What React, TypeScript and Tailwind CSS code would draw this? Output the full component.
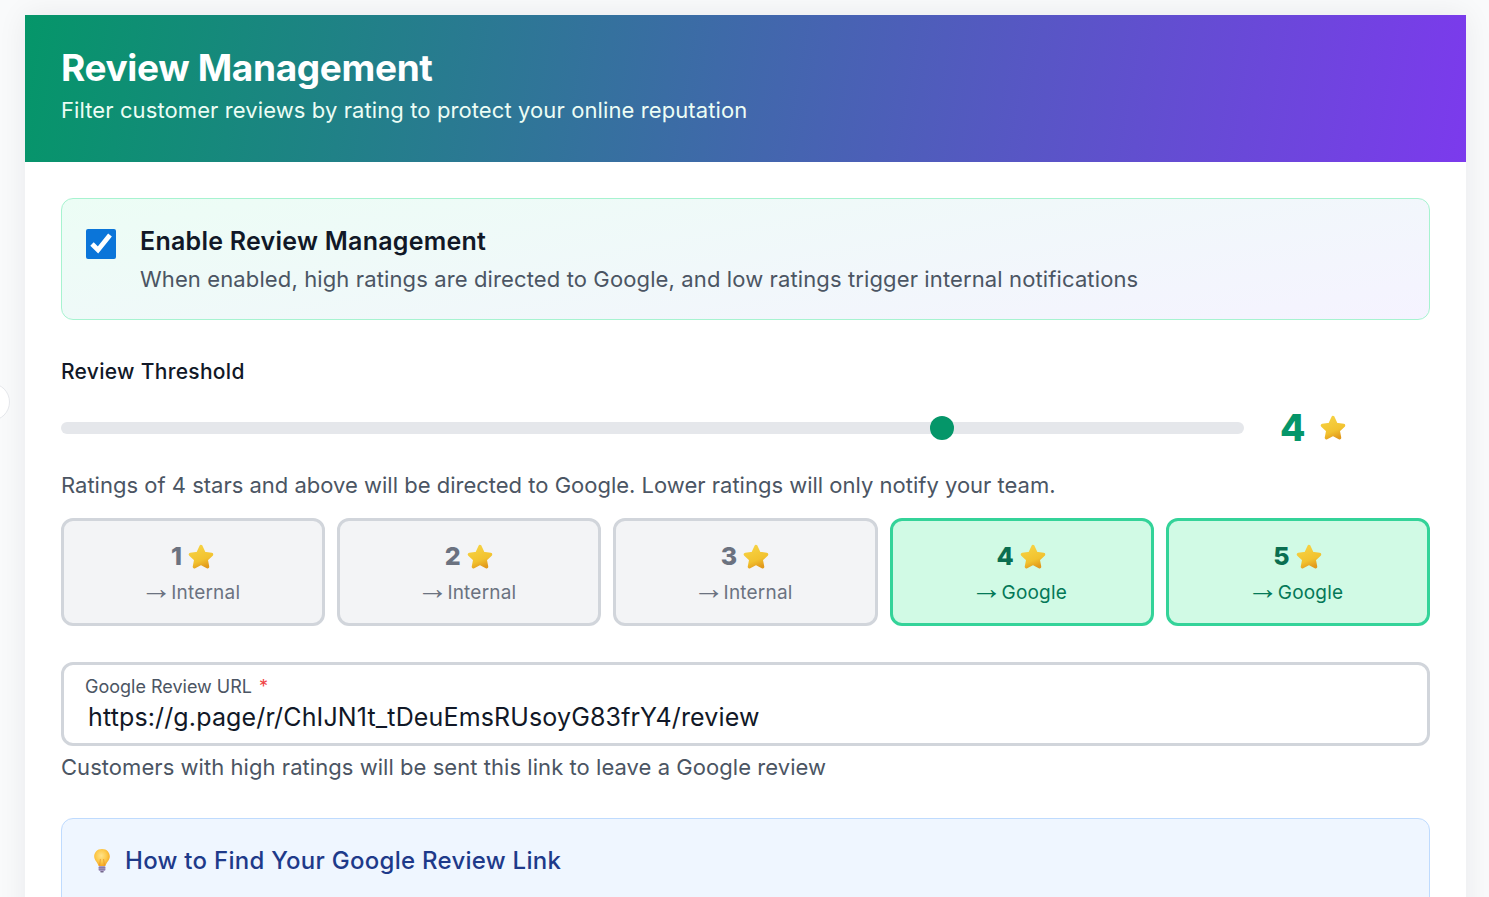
import { useId } from 'react'

const THRESHOLD = 4

const RATINGS = [1, 2, 3, 4, 5]

function Star({ className }: { className?: string }) {
  const id = useId()
  return (
    <svg viewBox="0 0 26 26" className={className}>
      <defs>
        <linearGradient id={id} x1="0.3" y1="0" x2="0.7" y2="1">
          <stop offset="0" stopColor="#f6d142" />
          <stop offset="0.65" stopColor="#f2c22f" />
          <stop offset="1" stopColor="#e29a1c" />
        </linearGradient>
      </defs>
      <path
        d="M13 3.4 L15.9 9.7 L22.8 10.6 L17.8 15.3 L19.1 22.1 L13 18.8 L6.9 22.1 L8.2 15.3 L3.2 10.6 L10.1 9.7 Z"
        fill={`url(#${id})`}
        stroke={`url(#${id})`}
        strokeWidth="3.2"
        strokeLinejoin="round"
      />
    </svg>
  )
}

function Bulb({ className }: { className?: string }) {
  const id = useId()
  return (
    <svg viewBox="0 0 18 26" className={className}>
      <defs>
        <radialGradient id={id} cx="0.45" cy="0.4" r="0.6">
          <stop offset="0" stopColor="#ffe38a" />
          <stop offset="0.6" stopColor="#fdc94a" />
          <stop offset="1" stopColor="#f6a821" />
        </radialGradient>
      </defs>
      <path
        d="M9 1 C4 1 1.2 4.6 1.2 8.4 C1.2 12.2 4.6 14 5.6 18 L12.4 18 C13.4 14 16.8 12.2 16.8 8.4 C16.8 4.6 14 1 9 1 Z"
        fill={`url(#${id})`}
      />
      <path d="M6.6 17.5 L7.4 11 M11.4 17.5 L10.6 11" stroke="#e8962a" strokeWidth="0.8" fill="none" />
      <rect x="5.6" y="18" width="6.8" height="5" rx="1.2" fill="#a79ac4" />
      <path d="M5.8 19.6 H12.2 M5.8 21.3 H12.2" stroke="#7f7198" strokeWidth="0.8" />
      <rect x="7.2" y="23" width="3.6" height="1.6" rx="0.8" fill="#75688d" />
    </svg>
  )
}

function RatingCard({ rating }: { rating: number }) {
  const toGoogle = rating >= THRESHOLD
  return (
    <div
      className={
        toGoogle
          ? 'flex h-[108px] flex-col items-center justify-center rounded-xl border-[3px] border-[#34d399] bg-[#d1fae5] pt-[6px]'
          : 'flex h-[108px] flex-col items-center justify-center rounded-xl border-[3px] border-[#d1d5db] bg-[#f3f4f6] pt-[6px]'
      }
    >
      <div className="flex h-9 items-center gap-[5px]">
        <span className={toGoogle ? 'text-[25px] font-extrabold text-[#0a6e50]' : 'text-[25px] font-extrabold text-[#6b7280]'}>
          {rating}
        </span>
        <Star className="h-[28px] w-[28px]" />
      </div>
      <div
        className={
          toGoogle
            ? 'flex h-9 items-center pr-[6px] text-[19px] tracking-[0.2px] text-[#047857]'
            : 'flex h-9 items-center pr-[6px] text-[19px] tracking-[0.2px] text-[#6b7280]'
        }
      >
        <span className="mr-[-1px] -translate-y-[5px] font-['Liberation_Sans'] text-[32px] leading-none">→</span>
        {toGoogle ? 'Google' : 'Internal'}
      </div>
    </div>
  )
}

export default function App() {
  return (
    <div className="relative h-[897px] overflow-hidden bg-[#f9fafb] pl-[25px] pr-[23px] pt-[15px] font-['Inter',sans-serif] text-[#111827]">
      {/* sidebar handle peeking in from the left */}
      <div className="absolute left-[-28px] top-[383px] h-[38px] w-[38px] rounded-full border border-[#e5e7eb] bg-white" />

      <div className="bg-white shadow-[0_0_28px_rgba(17,24,39,0.07)]">
        {/* Header */}
        <div className="bg-linear-[100deg] from-[#059669] to-[#7c3aed] px-9 pb-9 pt-[31px] text-white">
          <h1 className="text-[37px] font-bold leading-[44px] tracking-[-0.35px]">Review Management</h1>
          <p className="mt-1 text-[22px] leading-[32px] tracking-[0.1px] text-[#ecfdf5]">
            Filter customer reviews by rating to protect your online reputation
          </p>
        </div>

        <div className="px-9 pt-9">
          {/* Enable toggle */}
          <div className="flex gap-6 rounded-xl border border-[#a7f3d0] bg-linear-[170deg] from-[#ecfdf5] to-[#f5f3ff] p-6">
            <input
              type="checkbox"
              defaultChecked
              className="mt-[6px] h-[30px] w-[30px] shrink-0 accent-[#0b75d9]"
            />
            <div>
              <div className="text-[25px] font-semibold leading-[36px] tracking-[0.25px]">Enable Review Management</div>
              <div className="mt-1 text-[22px] leading-[32px] tracking-[0.12px] text-[#4b5563]">
                When enabled, high ratings are directed to Google, and low ratings trigger internal notifications
              </div>
            </div>
          </div>

          {/* Threshold slider */}
          <div className="mt-9 text-[21px] font-medium leading-[32px] tracking-[0.3px]">Review Threshold</div>
          <div className="mt-4 flex h-12 items-center">
            <div className="relative h-3 flex-1 rounded-full bg-[#e5e7eb]">
              <div className="absolute left-[74.5%] top-[-6px] h-6 w-6 -translate-x-1/2 rounded-full bg-[#059669]" />
            </div>
            <div className="ml-9 flex w-[150px] items-center gap-[14px]">
              <span className="text-[37px] font-extrabold text-[#059669]">4</span>
              <Star className="h-[28px] w-[28px]" />
            </div>
          </div>
          <p className="mt-[17px] text-[22px] leading-[32px] text-[#4b5563]">
            Ratings of 4 stars and above will be directed to Google. Lower ratings will only notify your team.
          </p>

          {/* Rating routing */}
          <div className="mt-[17px] grid grid-cols-5 gap-3">
            {RATINGS.map(rating => (
              <RatingCard key={rating} rating={rating} />
            ))}
          </div>

          {/* Google URL */}
          <div className="mt-9 h-[84px] rounded-xl border-[3px] border-[#d1d5db] pl-[21px] pt-[10px]">
            <div className="text-[18px] leading-[24px] text-[#4b5563]">
              Google Review URL <span className="ml-[2px] text-[#ef4444]">*</span>
            </div>
            <div className="ml-[3px] text-[25px] leading-[36px] tracking-[0.14px] text-[#111827]">
              https://g.page/r/ChIJN1t_tDeuEmsRUsoyG83frY4/review
            </div>
          </div>
          <p className="mt-[5px] text-[22px] leading-[32px] tracking-[0.05px] text-[#4b5563]">
            Customers with high ratings will be sent this link to leave a Google review
          </p>

          {/* Help box */}
          <div className="mt-[35px] h-[200px] rounded-xl border border-[#bfdbfe] bg-[#eff6ff] p-6">
            <div className="flex h-9 items-center gap-[14px] pl-[7px]">
              <Bulb className="h-[26px] w-[18px]" />
              <span className="text-[24px] font-medium tracking-[0.27px] text-[#1e3a8a]">
                How to Find Your Google Review Link
              </span>
            </div>
          </div>
        </div>
      </div>
    </div>
  )
}
